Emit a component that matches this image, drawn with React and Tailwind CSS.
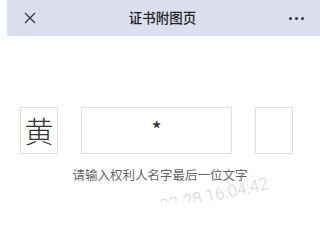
import React from 'react';

const App = () => {
  return (
    <div
      className="relative w-full h-[202px] bg-white overflow-hidden"
      style={{ fontFamily: '"Noto Sans CJK SC", "Noto Sans", sans-serif' }}
    >
      {/* Top bar */}
      <div className="ml-[7px] h-9 bg-[#dcdff0] flex items-center justify-between pl-[17px] pr-[16px]">
        <svg width="12" height="12" viewBox="0 0 12 12" className="text-[#333]">
          <path d="M1 1 L11 11 M11 1 L1 11" stroke="currentColor" strokeWidth="1.2" fill="none" />
        </svg>
        <span className="text-[13.5px] font-medium text-[#222] leading-none">证书附图页</span>
        <div className="flex items-center gap-[3px]">
          <span className="w-[3px] h-[3px] rounded-full bg-[#333]" />
          <span className="w-[3px] h-[3px] rounded-full bg-[#333]" />
          <span className="w-[3px] h-[3px] rounded-full bg-[#333]" />
        </div>
      </div>

      {/* Name inputs */}
      <div className="mt-[71px] pl-[20px] flex items-center gap-[23px]">
        <div className="w-[38px] h-[47px] border border-[#dedede] flex items-center justify-center text-[29px] font-light text-[#333] leading-none">
          黄
        </div>
        <div className="w-[151px] h-[47px] border border-[#dedede] flex items-center justify-center">
          <span className="text-[20px] font-medium text-[#333] leading-none pb-[4px]">*</span>
        </div>
        <div className="w-[38px] h-[47px] border border-[#dedede]" />
      </div>

      <p className="mt-[15px] text-center text-[12.5px] text-[#666] leading-none">
        请输入权利人名字最后一位文字
      </p>

      {/* Watermark */}
      <div
        className="absolute right-[52px] top-[172px] text-[17px] font-light leading-[22px] text-[#d6d6d6] whitespace-nowrap -rotate-[12deg] origin-right"
        style={{ fontFamily: 'Roboto, "Liberation Sans", sans-serif' }}
      >
        2024-03-28 16:04:42
      </div>
    </div>
  );
};

export default App;
